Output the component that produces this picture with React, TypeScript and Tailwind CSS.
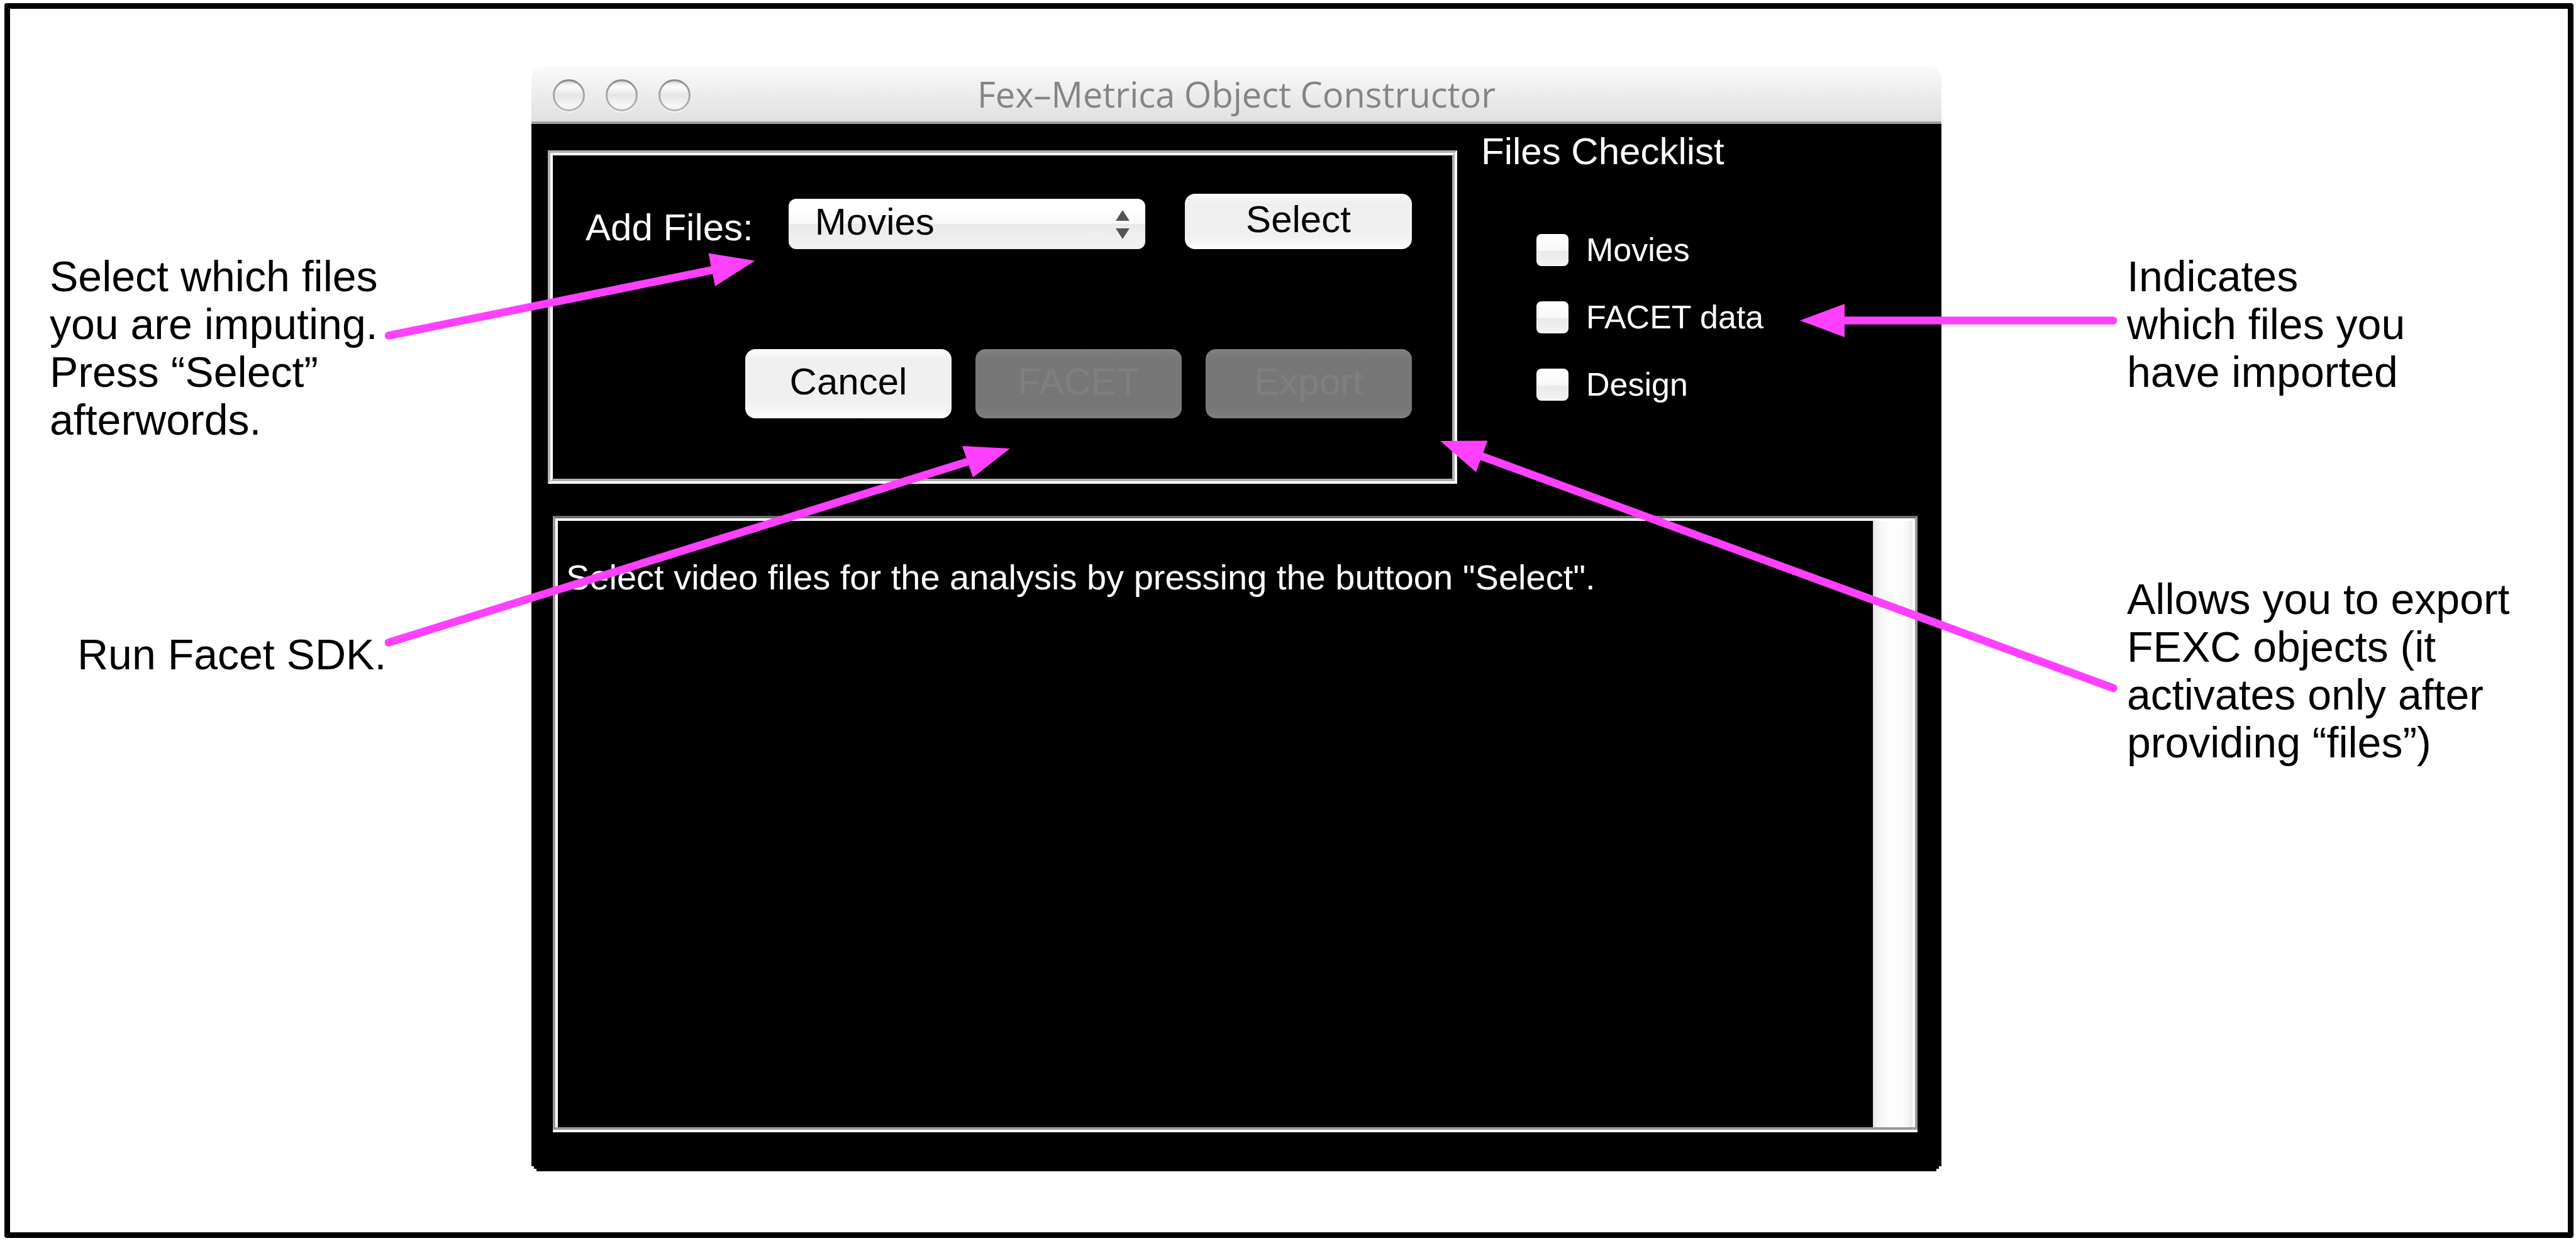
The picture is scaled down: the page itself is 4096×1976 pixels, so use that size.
import type { ReactNode } from "react";

const SANS = "font-['Liberation_Sans',Arial,sans-serif]";

function TrafficLight({ label }: { label: string }) {
  return (
    <button type="button" aria-label={label} className="h-[51px] w-[51px]">
      <svg viewBox="0 0 51 51" className="block h-full w-full overflow-visible" aria-hidden="true">
        <defs>
          <linearGradient id="lightFill" x1="0" y1="0" x2="0" y2="1">
            <stop offset="0" stopColor="#c4c4c4" />
            <stop offset="0.14" stopColor="#f4f4f4" />
            <stop offset="0.24" stopColor="#fbfbfb" />
            <stop offset="0.5" stopColor="#e6e6e6" />
            <stop offset="0.85" stopColor="#f6f6f6" />
            <stop offset="1" stopColor="#ececec" />
          </linearGradient>
          <linearGradient id="lightRim" x1="0" y1="0" x2="0" y2="1">
            <stop offset="0" stopColor="#8c8c8c" />
            <stop offset="0.5" stopColor="#a6a6a6" />
            <stop offset="1" stopColor="#b4b4b4" />
          </linearGradient>
        </defs>
        <circle cx="25.5" cy="28" r="25" fill="#f6f6f6" />
        <circle cx="25.5" cy="25.5" r="24" fill="url(#lightFill)" stroke="url(#lightRim)" strokeWidth="3" />
      </svg>
    </button>
  );
}

function TitleBar() {
  return (
    <header className="grid h-[92px] grid-cols-[1fr_auto_1fr] items-center rounded-t-[20px] border-b-4 border-[#a2a2a2] bg-linear-to-b from-[#fafafa] to-[#e0e0e0]">
      <div className="flex gap-[33px] pt-1 pl-[34px]">
        <TrafficLight label="Close" />
        <TrafficLight label="Minimize" />
        <TrafficLight label="Zoom" />
      </div>
      <h1 className="font-['Open_Sans','Noto_Sans',sans-serif] text-[56px] leading-[80px] font-medium whitespace-nowrap text-[#858585]">
        Fex–Metrica Object Constructor
      </h1>
    </header>
  );
}

function PushButton({ children, className, disabled }: { children: ReactNode; className: string; disabled?: boolean }) {
  const tone = disabled
    ? "bg-[linear-gradient(to_bottom,#808080,#777777_14%,#777777_84%,#7e7e7e)] text-[#808080]"
    : "bg-[linear-gradient(to_bottom,#ffffff,#f0f0f0_15%,#f0f0f0_75%,#f6f6f6_88%,#ffffff)] text-black";
  return (
    <button type="button" disabled={disabled} className={`rounded-[16px] pb-1.5 text-[60px] leading-[68px] ${tone} ${className}`}>
      {children}
    </button>
  );
}

function FilePanel() {
  return (
    <section className="mt-[30px] border-4 border-t-[#b0b0b0] border-r-white border-b-white border-l-[#b0b0b0]">
      <div className="flex flex-col gap-[159px] border-4 border-t-white border-r-[#b0b0b0] border-b-[#b0b0b0] border-l-white pt-[61px] pr-16 pb-24 pl-[52px]">
        <div className="flex items-end gap-[63px]">
          <div className="flex flex-1 items-end gap-14">
            <label htmlFor="file-kind" className="text-[60px] leading-[68px] whitespace-nowrap text-white">
              Add Files:
            </label>
            <div className="relative flex-1">
              <select
                id="file-kind"
                defaultValue="Movies"
                className="block h-20 w-full appearance-none rounded-[12px] bg-[linear-gradient(to_bottom,#ffffff,#ffffff_25%,#f7f7f7_50%,#eaeaea_50%,#f2f2f2)] pb-1.5 pl-[42px] text-[60px] leading-[68px] text-black"
              >
                <option>Movies</option>
                <option>FACET data</option>
                <option>Design</option>
              </select>
              <svg viewBox="0 0 22 46" className="pointer-events-none absolute top-[18px] right-[25px] h-[46px] w-[22px]" aria-hidden="true">
                <path d="M11 0 L22 17 L0 17 Z" fill="#545454" />
                <path d="M0 29 L22 29 L11 46 Z" fill="#545454" />
              </svg>
            </div>
          </div>
          <PushButton className="h-[88px] w-[361px]">Select</PushButton>
        </div>
        <div className="flex justify-end gap-[38px]">
          <PushButton className="h-[110px] w-[328px]">Cancel</PushButton>
          <PushButton className="h-[110px] w-[328px]" disabled>
            FACET
          </PushButton>
          <PushButton className="h-[110px] w-[328px]" disabled>
            Export
          </PushButton>
        </div>
      </div>
    </section>
  );
}

function Checklist() {
  return (
    <fieldset>
      <legend className="text-[60px] leading-[64px] text-white">Files Checklist</legend>
      <div className="flex flex-col gap-[55px] pt-[98px] pl-[88px]">
        {["Movies", "FACET data", "Design"].map((name) => (
          <label key={name} className="flex items-center gap-7 text-[52px] leading-[52px] whitespace-nowrap text-white">
            <input
              type="checkbox"
              className="h-[51px] w-[51px] appearance-none rounded-[8px] bg-[linear-gradient(to_bottom,#ffffff,#f8f8f8_50%,#e9e9e9_55%,#f4f4f4)]"
            />
            {name}
          </label>
        ))}
      </div>
    </fieldset>
  );
}

function MessageArea() {
  return (
    <section className="mt-[51px] mr-[38px] ml-[34px] border-b-4 border-white">
      <div className="border-4 border-t-[#6e6e6e] border-r-[#999999] border-b-[#999999] border-l-[#999999]">
        <div className="flex h-[968px] border-4 border-b-0 border-white">
          <textarea
            readOnly
            aria-label="Messages"
            className="block flex-1 resize-none overflow-hidden bg-black pt-[58px] pl-[13px] text-[56px] leading-[64px] text-white outline-none"
            defaultValue={'Select video files for the analysis by pressing the buttoon "Select".'}
          />
          <div className="w-[63px] bg-[linear-gradient(to_right,#dcdcdc,#f0f0f0_8%,#f8f8f8_25%,#fdfdfd_45%,#fcfcfc_75%,#f4f4f4_90%,#e9e9e9)]" />
        </div>
      </div>
    </section>
  );
}

function ConstructorWindow() {
  return (
    <main className="mt-[91px] self-start bg-transparent [clip-path:polygon(0_0,100%_0,100%_calc(100%-8px),calc(100%-4px)_calc(100%-8px),calc(100%-4px)_calc(100%-4px),calc(100%-8px)_calc(100%-4px),calc(100%-8px)_100%,8px_100%,8px_calc(100%-4px),4px_calc(100%-4px),4px_calc(100%-8px),0_calc(100%-8px))]">
      <TitleBar />
      <div className="bg-black pt-3 pb-[62px]">
        <div className="grid grid-cols-[1446fr_732fr] gap-[38px] pl-[26px]">
          <FilePanel />
          <Checklist />
        </div>
        <MessageArea />
      </div>
    </main>
  );
}

function Arrows() {
  return (
    <svg viewBox="0 0 4096 1976" className="pointer-events-none absolute inset-0 h-full w-full" aria-hidden="true">
      <g stroke="#ff40ff" strokeWidth="12.6" strokeLinecap="round">
        <path d="M618 533.5 L1134 429" />
        <path d="M618 1021.5 L1540 733.5" />
        <path d="M3360 509.5 L2932 509.5" />
        <path d="M3360.5 1094 L2355 725" />
      </g>
      <g fill="#ff40ff">
        <path d="M1200.5 414.5 L1126.5 402.5 L1137 455 Z" />
        <path d="M1606 713 L1530 709 L1547 759 Z" />
        <path d="M2862 509.5 L2933 483 L2933 536 Z" />
        <path d="M2290 701 L2365.5 700.5 L2347 750.5 Z" />
      </g>
    </svg>
  );
}

export default function App() {
  return (
    <div className={`relative flex min-h-screen bg-white pt-[5px] pr-1 pb-2 pl-[7px] text-black ${SANS}`}>
      <div className="grid flex-1 grid-cols-[829fr_2242fr_996fr] rounded-[4px] border-[9px] border-black">
        <aside className="flex flex-col gap-[297px] pt-[387px] pl-[63px] text-[68px] leading-[76px] whitespace-nowrap">
          <p>
            Select which files
            <br />
            you are imputing.
            <br />
            Press “Select”
            <br />
            afterwords.
          </p>
          <p className="pl-11">Run Facet SDK.</p>
        </aside>
        <ConstructorWindow />
        <aside className="flex flex-col gap-[285px] pt-[387px] pl-[295px] text-[68px] leading-[76px] whitespace-nowrap">
          <p>
            Indicates
            <br />
            which files you
            <br />
            have imported
          </p>
          <p>
            Allows you to export
            <br />
            FEXC objects (it
            <br />
            activates only after
            <br />
            providing “files”)
          </p>
        </aside>
      </div>
      <Arrows />
    </div>
  );
}
